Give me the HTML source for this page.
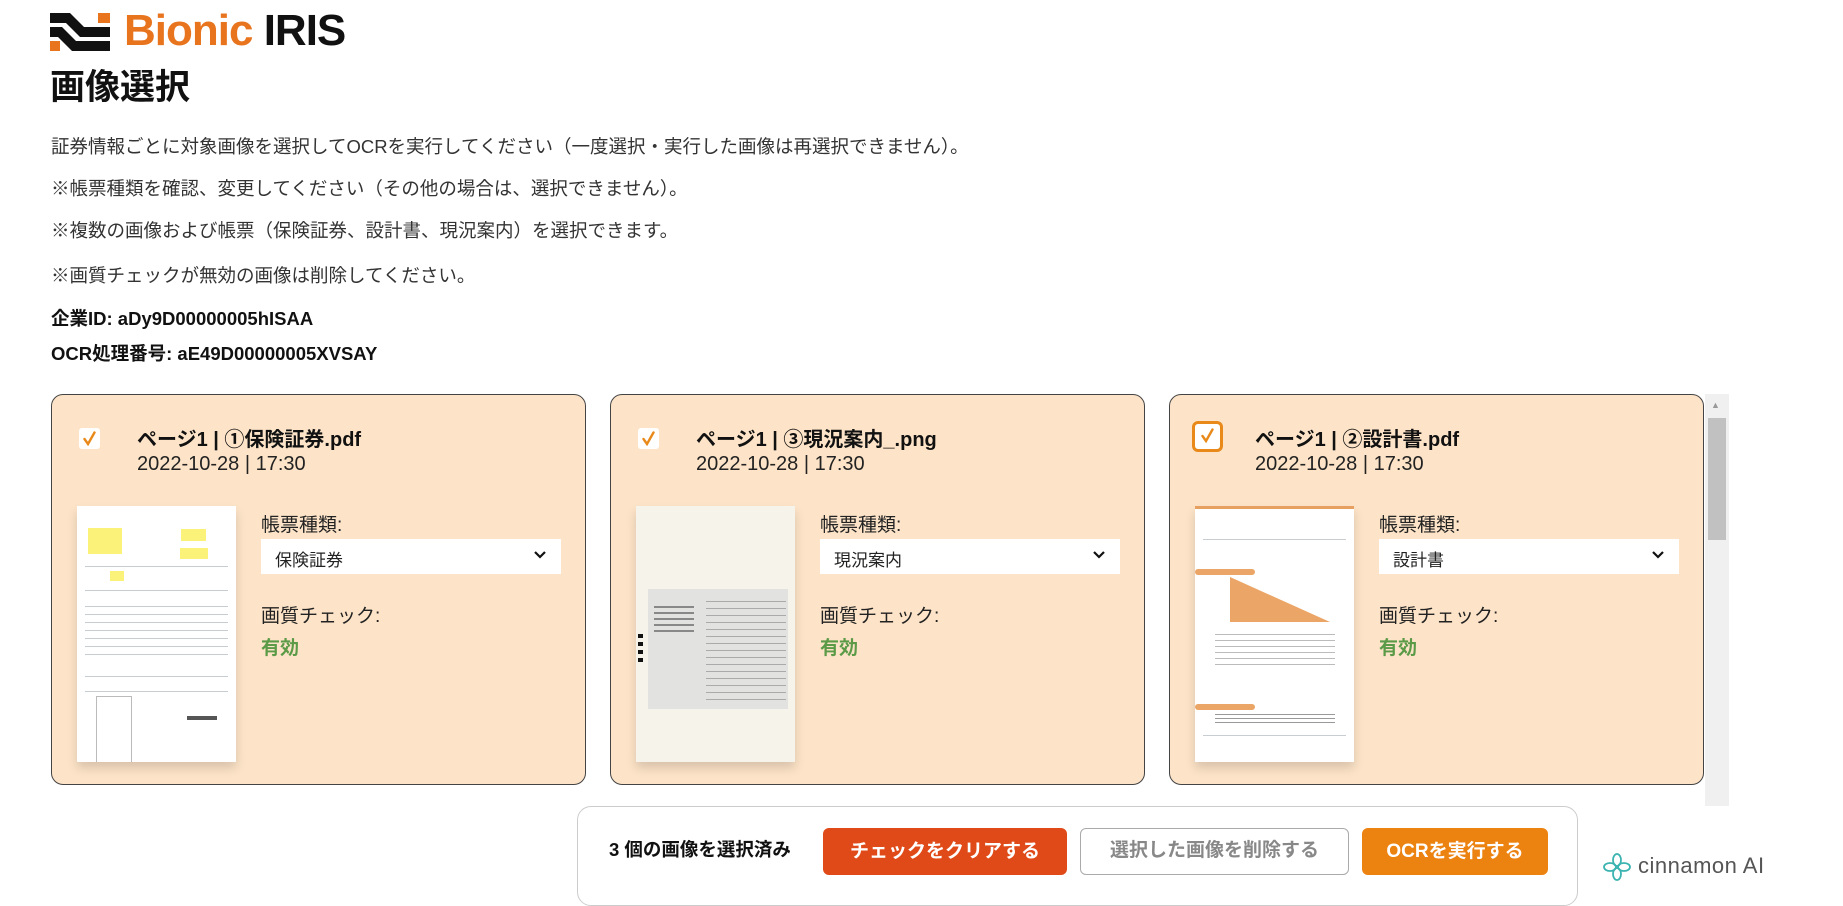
<!DOCTYPE html>
<html><head><meta charset="utf-8"><style>
*{box-sizing:border-box;margin:0;padding:0}
body{width:1843px;height:891px;overflow:hidden;background:#fff;font-family:"Liberation Sans","Noto Sans CJK JP",sans-serif;color:#222;position:relative}
.a{position:absolute;white-space:nowrap}
.p{font-size:18.5px;color:#333;left:51px}
.b{font-size:18.5px;font-weight:bold;left:51px;color:#111}
.card{position:absolute;top:394px;width:535px;height:391px;background:#fde4c8;border:1.5px solid #444;border-radius:12px}
.cb{position:absolute;left:27px;top:33px;width:21px;height:21px;background:#fff;border-radius:3px}
.cb svg{position:absolute;left:4px;top:3px}
.ttl{position:absolute;left:85px;top:28px;font-size:20px;font-weight:bold;color:#111}
.dt{position:absolute;left:85px;top:58px;font-size:20px;color:#222}
.th{position:absolute;left:25px;top:111px;width:159px;height:256px;background:#fff;box-shadow:0 6px 10px rgba(0,0,0,.15);overflow:hidden}
.lab{position:absolute;left:209px;font-size:19px;color:#222}
.sel{position:absolute;left:209px;top:144px;width:300px;height:35px;background:#fff;font-size:17px;padding:7px 0 0 14px;color:#222}
.sel svg{position:absolute;right:14px;top:11px}
.ok{position:absolute;left:209px;top:238px;font-size:19px;font-weight:bold;color:#5b9a47}
.ln{position:absolute;left:8px;right:8px;height:1px;background:#c8cdd2}
.btn{position:absolute;top:828px;height:47px;border-radius:6px;font-size:19px;font-weight:bold;text-align:center;line-height:47px}
</style></head><body>
<svg class="a" style="left:50px;top:13px" width="60" height="38" viewBox="0 0 60 38">
<path d="M0 0h20l14 14h26v10H30L16 10H0z" fill="#111"/><path d="M0 14h12l14 14h34v10H22L8 24H0z" fill="#111"/>
<path d="M0 28h10v10H0z" fill="#e8741e"/><path d="M48 0h12v10H48z" fill="#e8741e"/>
</svg>
<div class="a" style="left:124px;top:6px;font-size:44px;font-weight:bold;letter-spacing:-1px;line-height:50px"><span style="color:#e8741e">Bionic</span> <span style="color:#111">IRIS</span></div>
<div class="a" style="left:50px;top:66px;font-size:35px;font-weight:bold;color:#111;line-height:44px">画像選択</div>
<div class="a p" style="top:133px">証券情報ごとに対象画像を選択してOCRを実行してください（一度選択・実行した画像は再選択できません）。</div>
<div class="a p" style="top:175px">※帳票種類を確認、変更してください（その他の場合は、選択できません）。</div>
<div class="a p" style="top:217px">※複数の画像および帳票（保険証券、設計書、現況案内）を選択できます。</div>
<div class="a p" style="top:262px">※画質チェックが無効の画像は削除してください。</div>
<div class="a b" style="top:305px">企業ID: aDy9D00000005hISAA</div>
<div class="a b" style="top:340px">OCR処理番号: aE49D00000005XVSAY</div>

<div class="card" style="left:51px">
<div class="cb"><svg width="13" height="15" viewBox="0 0 13 15"><path d="M1.5 8l3.5 5 6.5-11.5" stroke="#e8891a" stroke-width="2.4" fill="none" stroke-linecap="round"/></svg></div>
<div class="ttl">ページ1 | ①保険証券.pdf</div><div class="dt">2022-10-28 | 17:30</div>
<div class="th">
<div style="position:absolute;left:11px;top:22px;width:34px;height:26px;background:#fbf27a"></div>
<div style="position:absolute;left:104px;top:23px;width:25px;height:12px;background:#fbf27a"></div>
<div style="position:absolute;left:103px;top:42px;width:28px;height:11px;background:#fbf27a"></div>
<div style="position:absolute;left:33px;top:65px;width:14px;height:10px;background:#fbf27a"></div>
<div class="ln" style="top:60px"></div><div class="ln" style="top:84px"></div><div class="ln" style="top:100px"></div><div class="ln" style="top:108px"></div><div class="ln" style="top:116px"></div><div class="ln" style="top:124px"></div><div class="ln" style="top:132px"></div><div class="ln" style="top:140px"></div><div class="ln" style="top:148px"></div><div class="ln" style="top:170px"></div><div class="ln" style="top:185px"></div>
<div style="position:absolute;left:19px;top:190px;width:36px;height:74px;border:1px solid #bbb"></div>
<div style="position:absolute;left:110px;top:210px;width:30px;height:4px;background:#555"></div>
</div>
<div class="lab" style="top:115px">帳票種類:</div>
<div class="sel">保険証券<svg width="14" height="10" viewBox="0 0 14 10"><path d="M2 2l5 5 5-5" stroke="#111" stroke-width="2.2" fill="none"/></svg></div>
<div class="lab" style="top:206px">画質チェック:</div><div class="ok">有効</div>
</div>

<div class="card" style="left:610px">
<div class="cb"><svg width="13" height="15" viewBox="0 0 13 15"><path d="M1.5 8l3.5 5 6.5-11.5" stroke="#e8891a" stroke-width="2.4" fill="none" stroke-linecap="round"/></svg></div>
<div class="ttl">ページ1 | ③現況案内_.png</div><div class="dt">2022-10-28 | 17:30</div>
<div class="th" style="background:#f6f3ea">
<div style="position:absolute;left:12px;top:83px;width:140px;height:120px;background:#e2e3e0"></div>
<div style="position:absolute;left:18px;top:100px;width:40px;height:30px;background:repeating-linear-gradient(#888 0 2px,transparent 2px 6px)"></div>
<div style="position:absolute;left:70px;top:95px;width:80px;height:100px;background:repeating-linear-gradient(#aaa 0 1px,transparent 1px 7px)"></div>
<div style="position:absolute;left:2px;top:128px;width:5px;height:30px;background:repeating-linear-gradient(#111 0 4px,transparent 4px 8px)"></div>
</div>
<div class="lab" style="top:115px">帳票種類:</div>
<div class="sel">現況案内<svg width="14" height="10" viewBox="0 0 14 10"><path d="M2 2l5 5 5-5" stroke="#111" stroke-width="2.2" fill="none"/></svg></div>
<div class="lab" style="top:206px">画質チェック:</div><div class="ok">有効</div>
</div>

<div class="card" style="left:1169px">
<div class="cb" style="left:22px;top:26px;width:31px;height:31px;border:3px solid #e8891a;border-radius:6px"><svg style="left:6px;top:4px" width="13" height="15" viewBox="0 0 13 15"><path d="M1.5 8l3.5 5 6.5-11.5" stroke="#e8891a" stroke-width="2.4" fill="none" stroke-linecap="round"/></svg></div>
<div class="ttl">ページ1 | ②設計書.pdf</div><div class="dt">2022-10-28 | 17:30</div>
<div class="th" style="border-top:3px solid #e8a060">
<div class="ln" style="top:30px"></div>
<div style="position:absolute;left:0;top:60px;width:60px;height:6px;background:#eba566;border-radius:3px"></div>
<div style="position:absolute;left:35px;top:68px;width:100px;height:45px;background:#eba566;clip-path:polygon(0 0,100% 100%,0 100%)"></div>
<div style="position:absolute;left:20px;top:125px;width:120px;height:35px;background:repeating-linear-gradient(#bbb 0 1px,transparent 1px 6px)"></div>
<div style="position:absolute;left:0;top:195px;width:60px;height:6px;background:#eba566;border-radius:3px"></div>
<div style="position:absolute;left:20px;top:205px;width:120px;height:12px;background:repeating-linear-gradient(#999 0 1px,transparent 1px 4px)"></div>
<div class="ln" style="top:226px"></div>
</div>
<div class="lab" style="top:115px">帳票種類:</div>
<div class="sel">設計書<svg width="14" height="10" viewBox="0 0 14 10"><path d="M2 2l5 5 5-5" stroke="#111" stroke-width="2.2" fill="none"/></svg></div>
<div class="lab" style="top:206px">画質チェック:</div><div class="ok">有効</div>
</div>

<div class="a" style="left:1705px;top:394px;width:24px;height:412px;background:#f0f0f0"></div>
<div class="a" style="left:1708px;top:418px;width:18px;height:122px;background:#c1c1c1"></div>
<div class="a" style="left:1711px;top:400px;font-size:9px;color:#999">▲</div>

<div class="a" style="left:577px;top:806px;width:1001px;height:100px;border:1.5px solid #ccc;border-radius:14px;background:#fff"></div>
<div class="a" style="left:609px;top:838px;font-size:18.5px;font-weight:bold;color:#111;line-height:24px">3 個の画像を選択済み</div>
<div class="btn" style="left:823px;width:244px;background:#e04a18;color:#fff">チェックをクリアする</div>
<div class="btn" style="left:1080px;width:269px;background:#fff;border:1.5px solid #aaa;color:#888;font-weight:bold;line-height:44px">選択した画像を削除する</div>
<div class="btn" style="left:1362px;width:186px;background:#ec8210;color:#fff">OCRを実行する</div>

<svg class="a" style="left:1602px;top:852px" width="30" height="30" viewBox="0 0 30 30" fill="none" stroke="#3bb3b0" stroke-width="1.8">
<ellipse cx="15" cy="8" rx="4" ry="6"/><ellipse cx="15" cy="22" rx="4" ry="6"/><ellipse cx="8" cy="15" rx="6" ry="4"/><ellipse cx="22" cy="15" rx="6" ry="4"/></svg>
<div class="a" style="left:1638px;top:853px;font-size:22px;color:#555;letter-spacing:.5px">cinnamon AI</div>
</body></html>
